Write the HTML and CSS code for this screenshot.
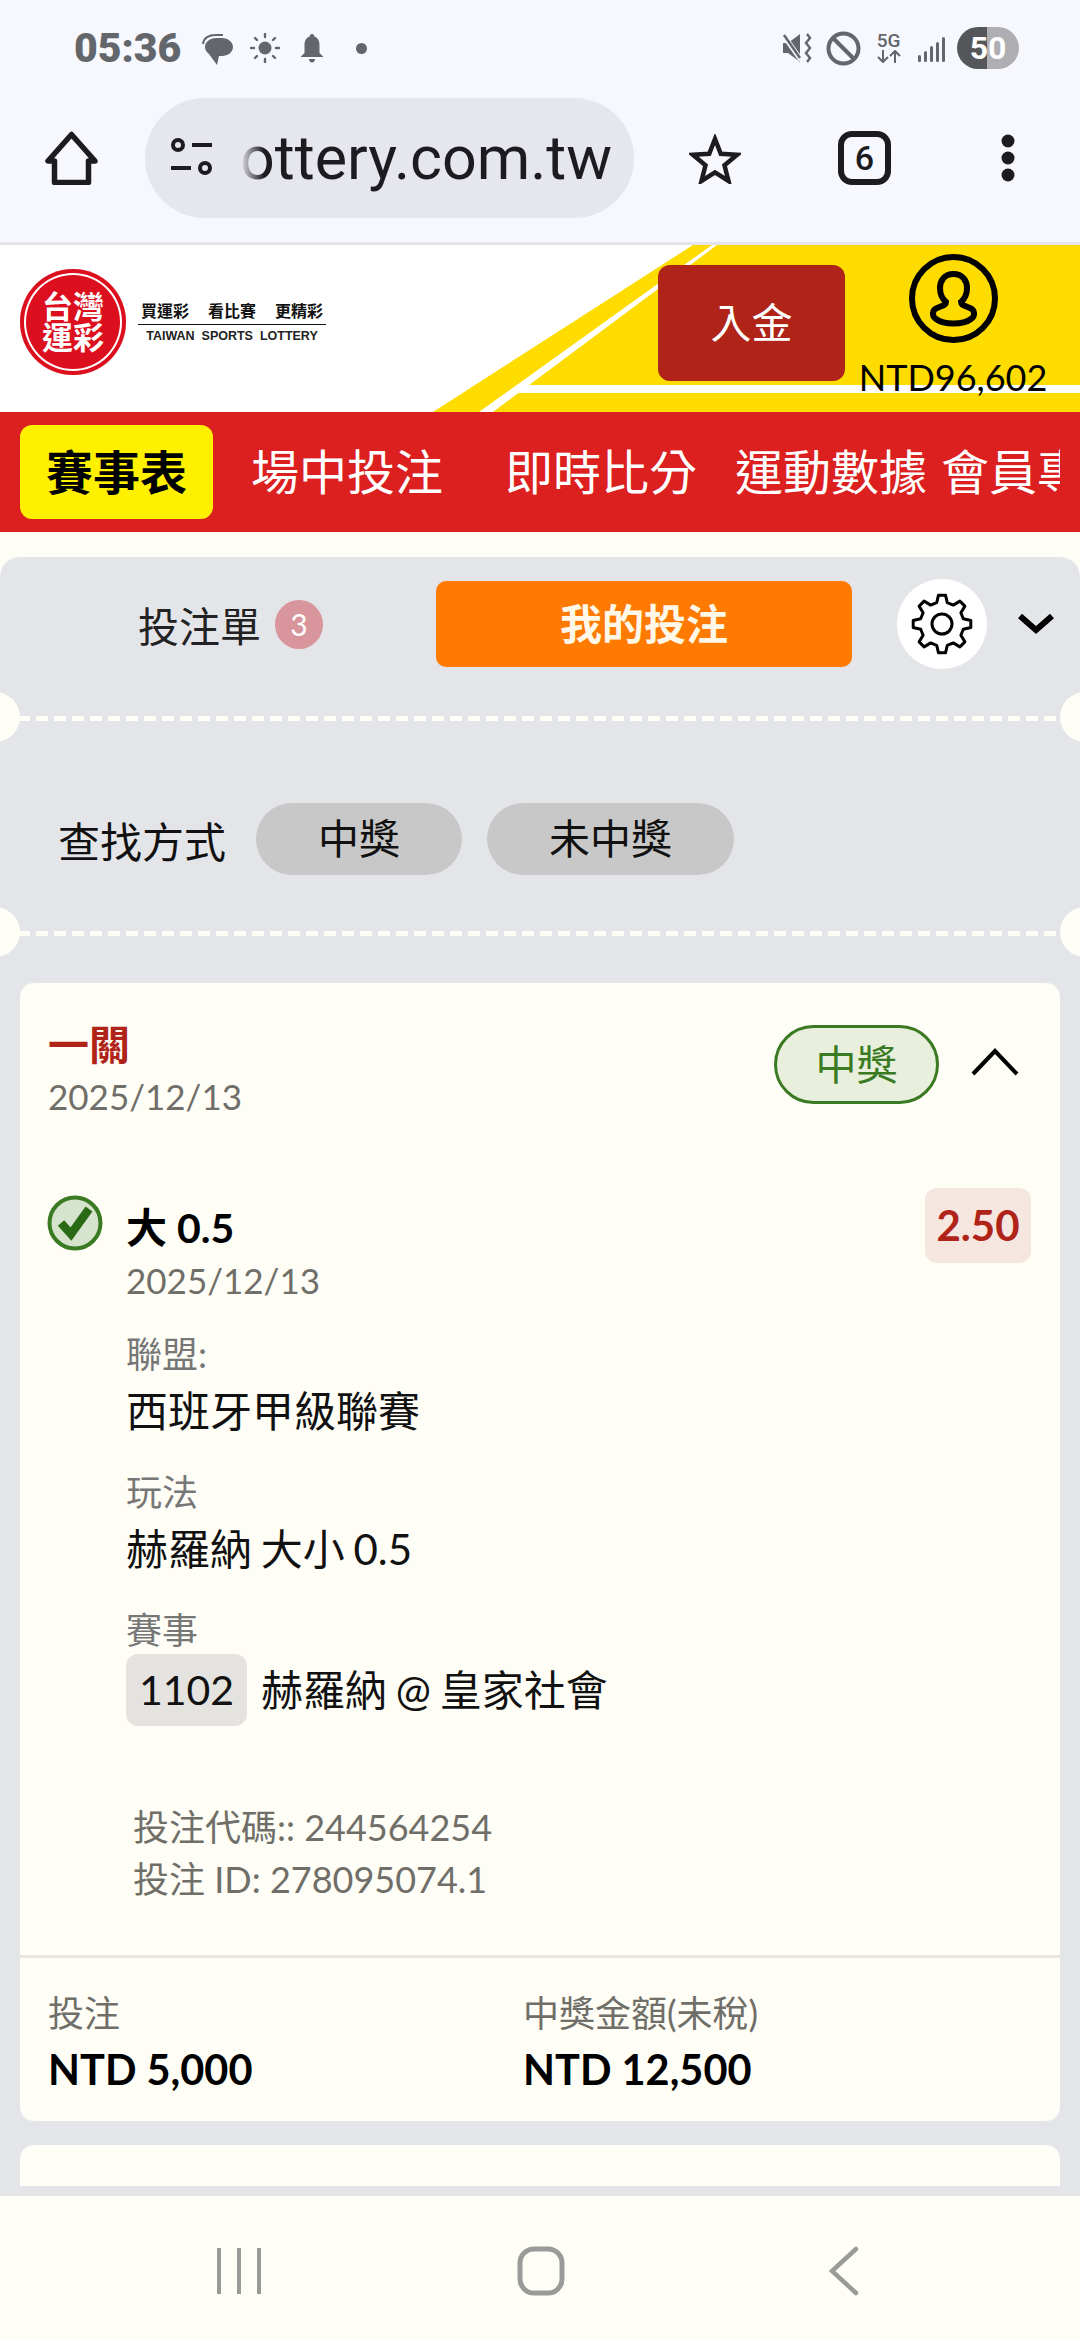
FILE: index.html
```html
<!DOCTYPE html>
<html lang="zh-Hant">
<head>
    <meta charset="utf-8" />
    <meta name="viewport" content="width=device-width, initial-scale=1.0">
    <title>台灣運彩</title>
    <link rel="stylesheet" href="styles.css">
</head>
<body>
<div class="page">

    <!-- phone status bar -->
    <div class="status-bar">
        <span class="status-time">05:36</span>
        <svg class="icon-bubble" width="32" height="33" viewBox="0 0 32 33">
            <path d="M1 11C2 4 8 2 14 2h7" fill="none" stroke="#63666b" stroke-width="2"/>
            <path d="M14 5h6c6 0 11 4 11 9s-5 9-11 9h-3l-2 9-8-11C4 19 3 16 3 14c0-5 5-9 11-9z" fill="#63666b"/>
        </svg>
        <svg class="icon-sun" width="30" height="30" viewBox="0 0 30 30" stroke="#63666b" stroke-width="2.4" stroke-linecap="round">
            <circle cx="15" cy="15" r="6.5" fill="#63666b" stroke="none"/>
            <path d="M15 1v3M15 26v3M1 15h3M26 15h3M5 5l2 2M23 23l2 2M25 5l-2 2M7 23l-2 2"/>
        </svg>
        <svg class="icon-bell" width="24" height="29" viewBox="0 0 24 29" fill="#63666b">
            <path d="M12 0c1.500 0 2.300 1 2.300 2.600C18 4 19.500 7 19.500 11v8l4 4H.5l4-4v-8c0-4 1.500-7 5.200-8.400C9.700 1 10.500 0 12 0z"/>
            <path d="M9 25h6c0 2-1.300 3.500-3 3.500S9 27 9 25z"/>
        </svg>
        <svg class="icon-dot" width="11" height="11" viewBox="0 0 11 11"><circle cx="5.500" cy="5.500" r="5.500" fill="#63666b"/></svg>

        <div class="status-right">
            <svg width="30" height="30" viewBox="0 0 30 30" fill="#63666b">
                <path d="M1 10h5L18 1v28L6 20H1z"/>
                <path d="M2 3l17 24" stroke="#f7f8fe" stroke-width="5"/>
                <path d="M2 2l16 23" stroke="#63666b" stroke-width="2.500"/>
                <path d="M25 1l3 4-4 5 4 5-4 5 4 5-3 4" fill="none" stroke="#63666b" stroke-width="2.400"/>
            </svg>
            <svg class="icon-block" width="35" height="35" viewBox="0 0 35 35" fill="none" stroke="#63666b" stroke-width="4">
                <circle cx="17.500" cy="17.500" r="15"/>
                <path d="M7 7l21 21"/>
            </svg>
            <div class="net">
                <span class="net-label">5G</span>
                <svg width="24" height="13" viewBox="0 0 24 13" fill="none" stroke="#63666b" stroke-width="2">
                    <path d="M6 0v12M1 7l5 5 5-5M18 13V1M13 6l5-5 5 5"/>
                </svg>
            </div>
            <svg class="icon-signal" width="27" height="25" viewBox="0 0 27 25" fill="#63666b">
                <rect x="0" y="18" width="3" height="7" rx="1.500"/>
                <rect x="6" y="14" width="3" height="11" rx="1.500"/>
                <rect x="12" y="9" width="3" height="16" rx="1.500"/>
                <rect x="18" y="5" width="3" height="20" rx="1.500"/>
                <rect x="24" y="0" width="3" height="25" rx="1.500"/>
            </svg>
            <div class="battery">50</div>
        </div>
    </div>

    <!-- browser toolbar -->
    <div class="toolbar">
        <svg class="icon-home" width="53" height="54" viewBox="0 0 53 54" fill="none" stroke="#1c1b1f" stroke-width="5.500" stroke-linejoin="round">
            <path d="M26.500 3.500L3 30h6.500v21.500h34V30H50z"/>
        </svg>
        <div class="url-pill">
            <svg class="icon-tune" width="44" height="40" viewBox="0 0 44 40" fill="none" stroke="#1c1b1f" stroke-width="4">
                <circle cx="8" cy="7" r="5"/>
                <path d="M22 7h20M1 30h20"/>
                <circle cx="35" cy="30" r="5"/>
            </svg>
            <span class="url-text">ottery.com.tw</span>
        </div>
        <svg class="icon-star" width="52" height="50" viewBox="0 0 52 50" fill="none" stroke="#1c1b1f" stroke-width="4.500" stroke-linejoin="miter">
            <path d="M26 5l5.800 14.800 16.200 1-12.500 10.400 4 15.800L26 38.400 12.500 47l4-15.800L4 20.800l16.200-1z"/>
        </svg>
        <div class="tab-count">6</div>
        <svg class="icon-dots" width="14" height="48" viewBox="0 0 14 48" fill="#1c1b1f">
            <circle cx="7" cy="7" r="6.500"/>
            <circle cx="7" cy="24" r="6.500"/>
            <circle cx="7" cy="41" r="6.500"/>
        </svg>
    </div>

    <!-- site header -->
    <header class="site-header">
        <svg class="header-art" width="1080" height="167" viewBox="0 0 1080 167">
            <path d="M693 0H1080V167H433z" fill="#ffdc00"/>
            <path d="M712 0h5L493 167H479z" fill="#fff"/>
            <path d="M517 140H1080v8H507z" fill="#fff"/>
        </svg>
        <div class="logo">
            <span>台</span><span>灣</span><span>運</span><span>彩</span>
        </div>
        <div class="tagline">
            <div class="tagline-zh"><span>買運彩</span><span>看比賽</span><span>更精彩</span></div>
            <div class="tagline-en">TAIWAN&nbsp; SPORTS&nbsp; LOTTERY</div>
        </div>
        <a class="deposit-btn">入金</a>
        <div class="account">
            <svg width="89" height="89" viewBox="0 0 89 89" fill="none" stroke="#000" stroke-width="6">
                <circle cx="44.500" cy="44.500" r="41.500"/>
                <path d="M44.500 20c9 0 13.500 6.500 13.500 14 0 6-2.500 11-6 14 0 3 3 3.500 9 6 5 2 5.500 8 1 11-4 3-10 4.500-17.500 4.500S31 68 27 65c-4.500-3-4-9 1-11 6-2.500 9-3 9-6-3.500-3-6-8-6-14 0-7.500 4.500-14 13.500-14z"/>
            </svg>
            <div class="account-balance">NTD96,602</div>
        </div>
    </header>

    <!-- site nav -->
    <nav class="site-nav">
        <a class="nav-active">賽事表</a>
        <a class="nav-item">場中投注</a>
        <a class="nav-item nav-item-wide">即時比分</a>
        <a class="nav-item">運動數據</a>
        <a class="nav-item nav-item-tight">會員專區</a>
    </nav>

    <main class="main">
        <section class="panel">
            <div class="panel-top">
                <div class="slip-tab">投注單<span class="slip-badge">3</span></div>
                <a class="my-bets-btn">我的投注</a>
                <div class="gear-btn">
                    <svg width="64" height="64" viewBox="-32 -32 64 64" fill="none" stroke="#000" stroke-width="3" stroke-linejoin="round">
                        <path d="M-5.300-21.300L-3.500-28.800H3.500L5.300-21.300L11.300-18.900L17.900-22.900L22.900-17.900L18.900-11.300L21.300-5.300L28.800-3.500V3.500L21.300 5.300L18.900 11.300L22.900 17.900L17.900 22.900L11.300 18.900L5.300 21.300L3.500 28.800H-3.500L-5.300 21.300L-11.300 18.900L-17.900 22.900L-22.900 17.900L-18.900 11.300L-21.300 5.300L-28.800 3.500V-3.500L-21.300-5.300L-18.900-11.300L-22.900-17.900L-17.900-22.900L-11.300-18.900z"/>
                        <circle cx="0" cy="0" r="10"/>
                    </svg>
                </div>
                <svg class="panel-chevron" width="36" height="20" viewBox="0 0 36 20" fill="none" stroke="#000" stroke-width="6">
                    <path d="M2 2l16 14L34 2"/>
                </svg>
            </div>

            <div class="ticket-line"></div>

            <div class="filter-row">
                <span class="filter-label">查找方式</span>
                <a class="filter-pill">中獎</a>
                <a class="filter-pill">未中獎</a>
            </div>

            <div class="ticket-line"></div>

            <div class="card-list">
                <article class="card">
                    <div class="card-head">
                        <div>
                            <div class="card-title">一關</div>
                            <div class="card-date">2025/12/13</div>
                        </div>
                        <span class="status-pill">中獎</span>
                        <svg class="card-chevron" width="48" height="28" viewBox="0 0 48 28" fill="none" stroke="#000" stroke-width="4">
                            <path d="M2 26L24 3l22 23"/>
                        </svg>
                    </div>

                    <div class="bet">
                        <svg class="bet-check" width="56" height="56" viewBox="0 0 56 56">
                            <circle cx="28" cy="28" r="25.500" fill="#d6e4cd" stroke="#3a7a22" stroke-width="4"/>
                            <path d="M14 28l10 11L42 14" fill="none" stroke="#2b6a14" stroke-width="8.500"/>
                        </svg>
                        <div class="bet-body">
                            <div class="bet-name">大 0.5</div>
                            <div class="bet-date">2025/12/13</div>

                            <div class="field-label field-label-first">聯盟:</div>
                            <div class="field-value">西班牙甲級聯賽</div>

                            <div class="field-label">玩法</div>
                            <div class="field-value">赫羅納 大小 0.5</div>

                            <div class="field-label">賽事</div>
                            <div class="match-row">
                                <span class="match-code">1102</span>
                                <span class="match-name">赫羅納 @ 皇家社會</span>
                            </div>
                        </div>
                        <div class="bet-odds">2.50</div>
                    </div>

                    <div class="bet-refs">
                        <div>投注代碼:: 244564254</div>
                        <div>投注 ID: 278095074.1</div>
                    </div>

                    <div class="card-foot">
                        <div>
                            <div class="foot-label">投注</div>
                            <div class="foot-value">NTD 5,000</div>
                        </div>
                        <div>
                            <div class="foot-label">中獎金額(未稅)</div>
                            <div class="foot-value">NTD 12,500</div>
                        </div>
                    </div>
                </article>

                <article class="card card-next"></article>
            </div>
        </section>
    </main>

    <!-- phone nav buttons -->
    <div class="phone-nav">
        <svg width="44" height="46" viewBox="0 0 44 46" fill="none" stroke="#9a9a98" stroke-width="4">
            <path d="M2 0v46M22 0v46M42 0v46"/>
        </svg>
        <svg class="nav-home" width="48" height="50" viewBox="0 0 48 50" fill="none" stroke="#9a9a98" stroke-width="5">
            <rect x="3" y="3" width="42" height="44" rx="14"/>
        </svg>
        <svg width="30" height="50" viewBox="0 0 30 50" fill="none" stroke="#9a9a98" stroke-width="4.500" stroke-linecap="round">
            <path d="M27 3L3 25l24 22"/>
        </svg>
    </div>

</div>
</body>
</html>
```

FILE: styles.css
```css
* {
    box-sizing: border-box;
}

body {
    margin: 0;
    font-family: "Lato", "Noto Sans CJK TC", sans-serif;
    color: #000;
    background-color: #fffef6;
}

svg {
    display: block;
    flex-shrink: 0;
}

.page {
    width: 1080px;
    height: 2340px;
    display: flex;
    flex-direction: column;
    overflow: hidden;
}

/* status bar */
.status-bar {
    height: 96px;
    flex-shrink: 0;
    display: flex;
    align-items: center;
    padding: 0 61px 0 74px;
    background-color: #f7f8fe;
}

.status-time {
    font-family: "Roboto", sans-serif;
    font-weight: 900;
    font-size: 41px;
    color: #63666b;
    width: 128px;
}

.icon-bubble {
    margin-top: 2px;
}

.icon-sun {
    margin-left: 16px;
}

.icon-bell {
    margin-left: 20px;
}

.icon-dot {
    margin-left: 32px;
}

.status-right {
    margin-left: auto;
    display: flex;
    align-items: center;
}

.icon-block {
    margin-left: 14px;
}

.net {
    margin-left: 15px;
    width: 25px;
    display: flex;
    flex-direction: column;
    align-items: center;
    gap: 2px;
}

.net-label {
    font-family: "Roboto", sans-serif;
    font-weight: 500;
    font-size: 19px;
    line-height: 15px;
    color: #63666b;
}

.icon-signal {
    margin-left: 17px;
    margin-top: 3px;
}

.battery {
    margin-left: 12px;
    width: 62px;
    height: 42px;
    border-radius: 21px;
    background: linear-gradient(to right, #55565a 48%, #aeaeb3 48%);
    color: #fff;
    font-family: "Roboto", sans-serif;
    font-weight: 700;
    font-size: 32px;
    line-height: 42px;
    text-align: center;
}

/* browser toolbar */
.toolbar {
    height: 149px;
    flex-shrink: 0;
    display: flex;
    align-items: center;
    padding: 0 0 23px 45px;
    background-color: #f7f8fe;
    border-bottom: 3px solid #e4e5ec;
}

.url-pill {
    margin-left: 47px;
    width: 489px;
    height: 120px;
    border-radius: 60px;
    background-color: #e5e6ee;
    display: flex;
    align-items: center;
    padding-left: 25px;
    overflow: hidden;
}

.url-text {
    margin-left: 26px;
    font-family: "Roboto", sans-serif;
    font-size: 61px;
    color: #1c1b1f;
    -webkit-mask-image: linear-gradient(to right, transparent, #000 24px);
    mask-image: linear-gradient(to right, transparent, #000 24px);
}

.icon-star {
    margin: 3px 0 0 55px;
}

.tab-count {
    margin-left: 97px;
    width: 53px;
    height: 54px;
    border: 6px solid #1c1b1f;
    border-radius: 14px;
    text-align: center;
    font-family: "Roboto", sans-serif;
    font-weight: 500;
    font-size: 34px;
    line-height: 42px;
    color: #1c1b1f;
}

.icon-dots {
    margin-left: 110px;
}

/* site header */
.site-header {
    position: relative;
    height: 167px;
    flex-shrink: 0;
    display: flex;
    align-items: center;
    padding: 0 34px 0 20px;
    background-color: #fff;
}

.header-art {
    position: absolute;
    top: 0;
    left: 0;
}

.logo {
    position: relative;
    width: 106px;
    height: 106px;
    margin-bottom: 13px;
    border-radius: 50%;
    background-color: #dc0f1e;
    box-shadow: inset 0 0 0 4px #dc0f1e, inset 0 0 0 6px #fff;
    display: grid;
    grid-template-columns: 31px 31px;
    grid-template-rows: 31px 31px;
    align-content: center;
    justify-content: center;
    color: #fff;
    font-weight: 700;
    font-size: 31px;
    line-height: 31px;
    text-align: center;
}

.tagline {
    position: relative;
    margin: 0 0 13px 12px;
    width: 188px;
}

.tagline-zh {
    display: flex;
    justify-content: space-between;
    padding: 0 3px 4px;
    border-bottom: 1.500px solid #111;
    font-weight: 700;
    font-size: 16px;
    line-height: 18px;
    color: #111;
}

.tagline-en {
    margin-top: 5px;
    text-align: center;
    font-family: "Liberation Sans", sans-serif;
    font-weight: 700;
    font-size: 12.500px;
    line-height: 13px;
    color: #222;
    white-space: nowrap;
}

.deposit-btn {
    position: relative;
    margin: 0 0 11px auto;
    width: 187px;
    height: 116px;
    border-radius: 12px;
    background-color: #b02318;
    color: #fff;
    font-size: 41px;
    line-height: 116px;
    text-align: center;
}

.account {
    position: relative;
    margin-left: 15px;
    width: 186px;
    padding-top: 9px;
    align-self: flex-start;
    display: flex;
    flex-direction: column;
    align-items: center;
}

.account-balance {
    margin-top: 16px;
    font-size: 36px;
    line-height: 36px;
    white-space: nowrap;
}

/* site nav */
.site-nav {
    height: 120px;
    flex-shrink: 0;
    display: flex;
    align-items: center;
    padding: 0 20px;
    background-color: #dc1f1f;
    white-space: nowrap;
    overflow: hidden;
}

.nav-active {
    flex-shrink: 0;
    width: 193px;
    height: 94px;
    border-radius: 12px;
    background-color: #fff000;
    font-weight: 700;
    font-size: 47px;
    line-height: 94px;
    text-align: center;
}

.nav-item {
    flex-shrink: 0;
    margin-left: 38px;
    color: #fff;
    font-size: 48px;
    line-height: 94px;
}

.nav-item-wide {
    margin-left: 62px;
}

.nav-item-tight {
    margin-left: 14px;
    width: 119px;
    overflow: hidden;
}

/* panel */
.main {
    flex: 1;
    min-height: 0;
    display: flex;
    flex-direction: column;
    padding-top: 25px;
    background-color: #fffef6;
}

.panel {
    flex: 1;
    min-height: 0;
    display: flex;
    flex-direction: column;
    padding: 22px 0 10px;
    border-radius: 20px 20px 0 0;
    background-color: #e3e5e8;
    overflow: hidden;
}

.panel-top {
    flex-shrink: 0;
    height: 90px;
    display: flex;
    align-items: center;
}

.slip-tab {
    width: 436px;
    padding-left: 138px;
    display: flex;
    align-items: center;
    font-size: 41px;
    color: #222;
}

.slip-badge {
    margin-left: 14px;
    width: 48px;
    height: 49px;
    border-radius: 50%;
    background-color: #d8969c;
    color: #fff;
    font-size: 30px;
    line-height: 49px;
    text-align: center;
}

.my-bets-btn {
    width: 416px;
    height: 86px;
    border-radius: 10px;
    background-color: #ff7a00;
    color: #fff8e8;
    font-weight: 700;
    font-size: 42px;
    line-height: 86px;
    text-align: center;
}

.gear-btn {
    margin-left: 45px;
    width: 90px;
    height: 90px;
    border-radius: 50%;
    background-color: #fff;
    display: flex;
    align-items: center;
    justify-content: center;
}

.panel-chevron {
    margin: 0 0 0 31px;
}

.ticket-line {
    position: relative;
    flex-shrink: 0;
    height: 5px;
    margin-top: 47px;
    background: repeating-linear-gradient(to right, #fffef6 0, #fffef6 12px, transparent 12px, transparent 18px);
}

.ticket-line::before,
.ticket-line::after {
    content: "";
    position: absolute;
    top: -24px;
    width: 50px;
    height: 50px;
    border-radius: 50%;
    background-color: #fffef6;
}

.ticket-line::before {
    left: -30px;
}

.ticket-line::after {
    right: -30px;
}

.filter-row {
    flex-shrink: 0;
    margin-top: 82px;
    margin-bottom: 9px;
    height: 72px;
    display: flex;
    align-items: center;
    padding-left: 58px;
}

.filter-label {
    font-size: 42px;
    color: #111;
    width: 198px;
}

.filter-pill {
    height: 72px;
    margin-right: 25px;
    padding: 0 62px;
    border-radius: 36px;
    background-color: #c8c8c8;
    font-size: 41px;
    line-height: 72px;
    color: #111;
}

/* cards */
.card-list {
    flex: 1;
    min-height: 0;
    margin-top: 47px;
    padding: 0 20px;
    overflow: hidden;
}

.card {
    border-radius: 14px;
    background-color: #fffef6;
}

.card-next {
    height: 120px;
    margin-top: 24px;
}

.card-head {
    display: flex;
    align-items: flex-start;
    padding: 38px 28px 0;
    height: 205px;
}

.card-title {
    color: #b02318;
    font-weight: 700;
    font-size: 41px;
    line-height: 48px;
}

.card-date,
.bet-date {
    color: #6f6e68;
    font-size: 35px;
    line-height: 40px;
}

.card-date {
    margin-top: 7px;
}

.status-pill {
    margin: 4px 0 0 auto;
    width: 165px;
    height: 79px;
    border: 3px solid #3a7a22;
    border-radius: 40px;
    background-color: #e8efdc;
    color: #3a7a22;
    font-size: 41px;
    line-height: 73px;
    text-align: center;
}

.card-chevron {
    margin: 27px 13px 0 32px;
}

.bet {
    display: flex;
    align-items: flex-start;
    padding: 0 29px 0 27px;
}

.bet-check {
    margin-top: 7px;
}

.bet-body {
    flex: 1;
    margin-left: 23px;
}

.bet-name {
    margin-top: 16px;
    font-weight: 700;
    font-size: 41px;
    line-height: 48px;
}

.bet-date {
    margin-top: 8px;
}

.field-label {
    margin-top: 36px;
    color: #777;
    font-size: 36px;
    line-height: 40px;
}

.field-label-first {
    margin-top: 34px;
}

.field-value {
    margin-top: 12px;
    font-size: 42px;
    line-height: 50px;
    color: #111;
    word-spacing: -2px;
}

.bet-odds {
    width: 106px;
    height: 75px;
    border-radius: 12px;
    background-color: #f6e6e0;
    color: #b02318;
    font-weight: 700;
    font-size: 42px;
    line-height: 75px;
    text-align: center;
}

.match-row {
    display: flex;
    align-items: center;
    margin-top: 4px;
}

.match-code {
    margin-right: 14px;
    width: 121px;
    height: 72px;
    border-radius: 12px;
    background-color: #e5e3df;
    font-size: 41px;
    line-height: 72px;
    text-align: center;
    color: #111;
}

.match-name {
    font-size: 42px;
    line-height: 50px;
    color: #111;
    word-spacing: -2px;
}

.bet-refs {
    margin-top: 75px;
    padding-left: 113px;
    color: #6f6e68;
    font-size: 36px;
    line-height: 52px;
}

.card-foot {
    margin-top: 50px;
    height: 166px;
    border-top: 3px solid #e8e6df;
    padding: 35px 28px 0;
    display: grid;
    grid-template-columns: 475px 1fr;
}

.foot-label {
    color: #6f6e68;
    font-size: 36px;
    line-height: 40px;
}

.foot-value {
    margin-top: 11px;
    font-weight: 700;
    font-size: 41.500px;
    line-height: 50px;
}

/* phone nav */
.phone-nav {
    height: 144px;
    flex-shrink: 0;
    display: flex;
    align-items: center;
    padding: 6px 221px 0 217px;
    justify-content: space-between;
    background-color: #fffef6;
}

.nav-home {
    margin-right: 8px;
}
```
